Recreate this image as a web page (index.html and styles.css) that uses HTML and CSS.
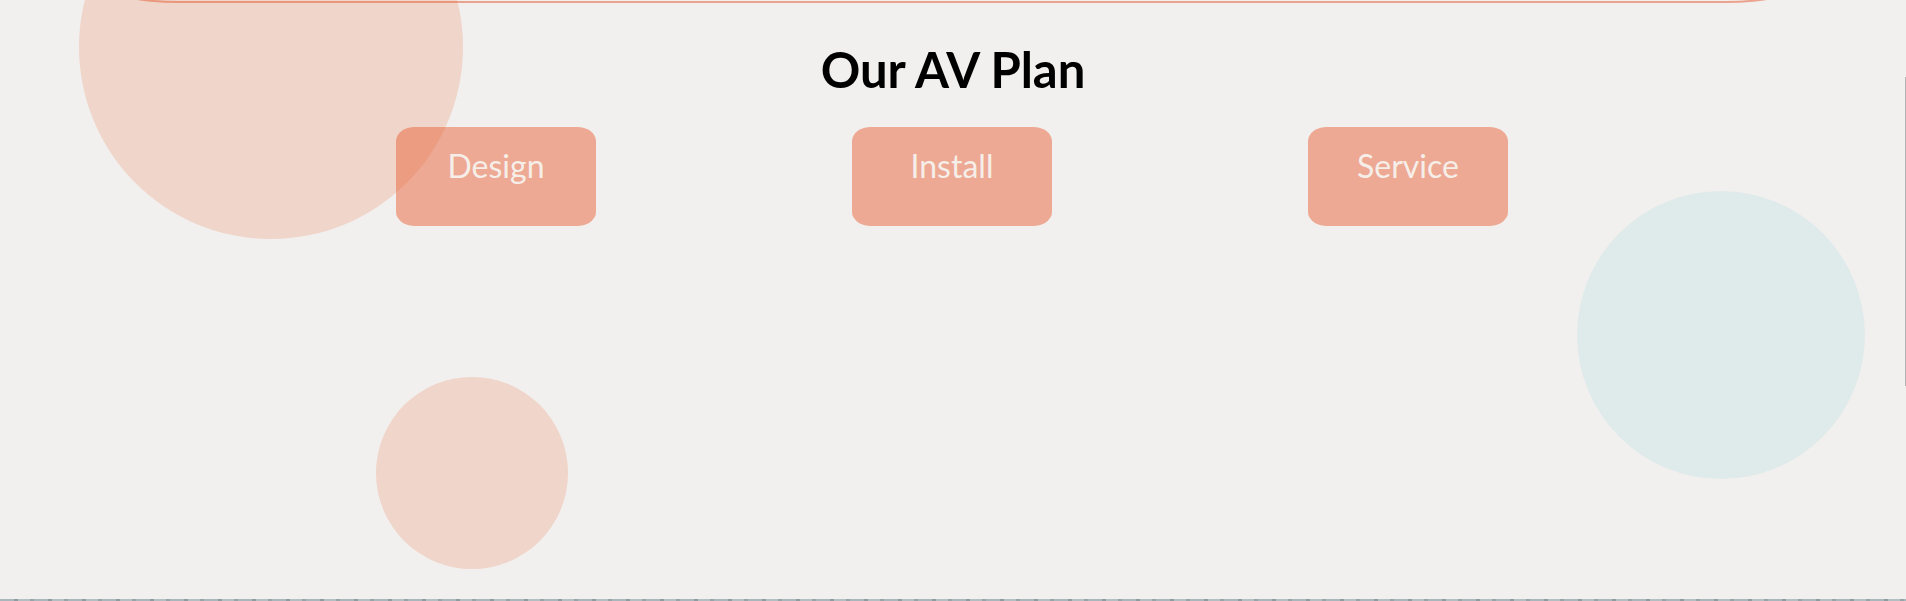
FILE: index.html
```html
<!DOCTYPE html>
<html lang="en">
<head>
<meta charset="utf-8">
<title>Our AV Plan</title>
<link rel="stylesheet" href="styles.css">
</head>
<body>
<div class="page">
  <div class="prev-card"></div>
  <section class="plan">
    <h2 class="plan-title">Our AV Plan</h2>
    <div class="plan-grid">
      <div class="plan-cell"><a class="plan-btn" href="#">Design</a></div>
      <div class="plan-cell"><a class="plan-btn" href="#">Install</a></div>
      <div class="plan-cell"><a class="plan-btn" href="#">Service</a></div>
    </div>
  </section>
  <div class="strip"></div>
  <span class="blob blob-big"></span>
  <span class="blob blob-small"></span>
  <span class="blob blob-blue"></span>
  <span class="edge-line"></span>
</div>
</body>
</html>
```

FILE: styles.css
```css
html, body {
  margin: 0;
  padding: 0;
}
body {
  background: #f2f0ee;
  font-family: "Lato", "Noto Sans", sans-serif;
  overflow: hidden;
}
.page {
  position: relative;
  width: 1906px;
  height: 601px;
  overflow: hidden;
  display: flex;
  flex-direction: column;
}
.prev-card {
  flex: none;
  box-sizing: border-box;
  width: 2084px;
  height: 300px;
  margin: -297px 0 0 -90px;
  border: 2px solid #eba38d;
  border-top: none;
  border-radius: 0 0 267px 267px;
}
.plan {
  flex: 1;
  display: flex;
  flex-direction: column;
  align-items: center;
}
.plan-title {
  margin: 37px 0 0;
  font-size: 49px;
  line-height: 58px;
  font-weight: 700;
  color: #000;
}
.plan-grid {
  margin-top: 29px;
  display: grid;
  grid-template-columns: repeat(3, 456px);
  transform: translateX(-1px);
}
.plan-cell {
  display: flex;
  justify-content: center;
}
.plan-btn {
  box-sizing: border-box;
  width: 200px;
  height: 99px;
  padding-top: 19px;
  background: #eda993;
  border-radius: 19px / 14px;
  color: #f6eee8;
  font-size: 32px;
  line-height: 40px;
  font-weight: 400;
  text-align: center;
  text-decoration: none;
}
.strip {
  flex: none;
  height: 2px;
  background: repeating-linear-gradient(90deg, #a9b6bb 0 14px, #8e9b9f 14px 18px, #b2bec2 18px 30px, #97a4a8 30px 34px);
}
.blob {
  position: absolute;
  border-radius: 50%;
  pointer-events: none;
}
.blob-big {
  left: 79px;
  top: -145px;
  width: 384px;
  height: 384px;
  background: rgba(232, 105, 58, 0.2);
}
.blob-small {
  left: 376px;
  top: 377px;
  width: 192px;
  height: 192px;
  background: rgba(232, 105, 58, 0.2);
}
.blob-blue {
  left: 1577px;
  top: 191px;
  width: 288px;
  height: 288px;
  background: #dfeaeb;
}
.edge-line {
  position: absolute;
  right: 0;
  top: 77px;
  width: 1px;
  height: 309px;
  background: #b4b4b4;
}
```
